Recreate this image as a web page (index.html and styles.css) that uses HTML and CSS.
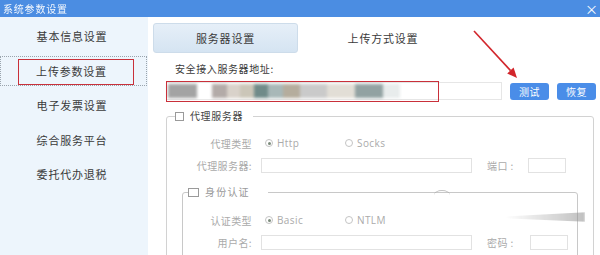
FILE: index.html
```html
<!DOCTYPE html>
<html lang="zh-CN">
<head>
<meta charset="utf-8">
<title>系统参数设置</title>
<link rel="stylesheet" href="styles.css">
</head>
<body>
<div class="window">
  <div class="titlebar">
    <span class="title">系统参数设置</span>
    <span class="close">×</span>
  </div>
  <div class="main">
    <nav class="sidebar">
      <div class="nav-item">基本信息设置</div>
      <div class="nav-item active"><div class="focus">上传参数设置</div><span class="mark"></span></div>
      <div class="nav-item">电子发票设置</div>
      <div class="nav-item">综合服务平台</div>
      <div class="nav-item">委托代办退税</div>
    </nav>
    <section class="content">
      <div class="tabs">
        <div class="tab tab-active">服务器设置</div>
        <div class="tab tab-plain">上传方式设置</div>
      </div>
      <div class="addr-label">安全接入服务器地址:</div>
      <div class="addr-row">
        <div class="addr-input">
          <div class="blurred"></div>
          <span class="addr-mark"></span>
        </div>
        <button class="btn">测试</button>
        <button class="btn">恢复</button>
      </div>
      <fieldset class="group outer">
        <legend class="legend"><span class="check"></span>代理服务器</legend>
        <div class="row">
          <span class="lbl lbl-outer">代理类型</span>
          <div class="radios">
            <span class="opt"><span class="radio on"></span>Http</span>
            <span class="opt"><span class="radio"></span>Socks</span>
          </div>
        </div>
        <div class="row">
          <span class="lbl lbl-outer">代理服务器:</span>
          <span class="inp inp-wide"></span>
          <span class="lbl2 port-lbl">端口 :</span>
          <span class="inp inp-port"></span>
        </div>
        <fieldset class="group inner">
          <legend class="legend legend-inner"><span class="check"></span>身份认证</legend>
          <div class="row">
            <span class="lbl lbl-inner">认证类型</span>
            <div class="radios">
              <span class="opt"><span class="radio on"></span>Basic</span>
              <span class="opt"><span class="radio"></span>NTLM</span>
            </div>
          </div>
          <div class="row">
            <span class="lbl lbl-inner">用户名:</span>
            <span class="inp inp-wide"></span>
            <span class="lbl2 pwd-lbl">密码 :</span>
            <span class="inp inp-pwd"></span>
          </div>
        </fieldset>
      </fieldset>
    </section>
  </div>
  <span class="smear"></span>
  <span class="arc"></span>
  <svg class="arrow" width="600" height="255" viewBox="0 0 600 255">
    <line x1="474" y1="31" x2="510.6" y2="70.6" stroke="#d2262c" stroke-width="1.6"/>
    <polygon points="517,78 507.2,73.4 513.6,67.6" fill="#d2262c"/>
  </svg>
</div>
</body>
</html>
```

FILE: styles.css
```css
* { box-sizing: border-box; margin: 0; padding: 0; }
body { margin: 0; background: #fff; font-family: "Noto Sans CJK SC", "Noto Sans", sans-serif; }

.window { width: 600px; height: 255px; overflow: hidden; position: relative; display: flex; flex-direction: column; background: #fff; }

.titlebar { height: 17px; flex: none; background: #4b8de2; color: #fff; display: flex; align-items: center; justify-content: space-between; padding: 0 2px 0 3px; }
.title { font-size: 10px; line-height: 12px; letter-spacing: 0.8px; opacity: 0.92; }
.close { font-size: 13px; line-height: 12px; }

.main { flex: 1; display: flex; min-height: 0; }

.sidebar { width: 148px; flex: none; background: #edf5fc; padding-top: 2px; display: flex; flex-direction: column; }
.nav-item { height: 34.5px; display: flex; align-items: center; justify-content: center; padding-right: 4px; font-size: 11px; letter-spacing: 0.8px; color: #3a3a3a; position: relative; }
.nav-item.active { padding-right: 0; }
.focus { width: 147px; height: 30px; margin-right: 1px; border: 1px dotted #9aa4ad; display: flex; align-items: center; justify-content: center; padding-right: 4px; }
.mark { position: absolute; left: 18px; top: 5px; width: 116px; height: 26px; border: 1.5px solid #c9303a; }

.content { flex: 1; margin-left: 5px; display: flex; flex-direction: column; }

.tabs { display: flex; margin-top: 6px; height: 30px; flex: none; }
.tab { height: 30px; display: flex; align-items: center; justify-content: center; font-size: 11px; letter-spacing: 0.8px; color: #3a3a3a; }
.tab-active { width: 145px; background: linear-gradient(#e6eff8, #d5e4f2); border: 1px solid #cddcea; border-radius: 3px; }
.tab-plain { width: 170px; }

.addr-label { margin-top: 10px; padding-left: 22px; font-size: 10px; line-height: 12px; letter-spacing: 0.6px; color: #3a3a3a; }

.addr-row { margin-top: 7px; margin-left: 13px; height: 20px; display: flex; align-items: center; }
.addr-input { width: 336px; height: 18px; border: 1px solid #e6e6e6; background: #fff; position: relative; }
.blurred { position: absolute; left: 1px; top: 1px; width: 232px; height: 14px; filter: blur(1.4px);
  background: linear-gradient(to right,
    #a3a3a3 0, #a3a3a3 29px, #fff 29px, #fff 44px,
    #b3aba8 44px, #b3aba8 59px, #d9d2ca 59px, #d9d2ca 72px,
    #cbc6b8 72px, #cbc6b8 86px, #708b89 86px, #708b89 100px,
    #a8b8b8 100px, #a8b8b8 115px, #b5ad9d 115px, #b5ad9d 132px,
    #cacaca 132px, #cacaca 159px, #e2ded6 159px, #e2ded6 187px,
    #92a2a2 187px, #92a2a2 215px, #e8ecec 215px, #e8ecec 232px); }
.addr-mark { position: absolute; left: -1px; top: -2px; width: 273px; height: 21px; border: 1.5px solid #c9303a; }

.btn { width: 39px; height: 17px; margin-left: 8px; border: none; border-radius: 3px; background: #4a8de8; color: #fff; font-family: inherit; font-size: 10px; letter-spacing: 0.6px; line-height: 17px; }

.group { border: 1px solid #d2d2d2; border-radius: 3px; min-width: 0; }
.outer { margin: 10px 6px 0 13px; padding: 10px 0 0 0; flex: 1; }
.inner { margin: 10px 15px 0 15px; padding: 11px 0 30px 0; border-color: #c8c8c8; }

.legend { margin-left: 8px; padding-right: 10px; display: flex; align-items: center; height: 12px; font-size: 10px; line-height: 12px; letter-spacing: 0.6px; color: #444; }
.legend-inner { margin-left: 5px; padding-right: 18px; color: #999; letter-spacing: 1.2px; }
.check { width: 9px; height: 9px; border: 1px solid #9a9a9a; background: #fff; margin-right: 6px; }
.legend-inner .check { width: 11px; margin-right: 6px; }

.row { height: 22px; display: flex; align-items: center; font-size: 10px; color: #aaa; letter-spacing: 0.4px; }
.lbl { text-align: right; }
.lbl-outer { width: 85px; }
.lbl-inner { width: 69px; }
.radios { display: flex; margin-left: 13px; }
.opt { width: 80px; display: flex; align-items: center; font-family: "Open Sans", "Noto Sans", sans-serif; font-size: 10px; color: #aaa; }
.radio { width: 8px; height: 8px; border: 1px solid #c4c4c4; border-radius: 50%; margin-right: 4px; display: flex; align-items: center; justify-content: center; }
.radio.on::after { content: ""; width: 3px; height: 3px; border-radius: 50%; background: #7a8a7a; }

.inp { height: 15px; border: 1px solid #e2e2e2; background: #fff; }
.inp-wide { width: 211px; margin-left: 9px; }
.lbl2 { margin-left: 15px; color: #aaa; }
.port-lbl { width: 41px; }
.pwd-lbl { width: 43px; }
.inp-port { width: 38px; }
.inp-pwd { width: 38px; }

.smear { position: absolute; left: 505px; top: 211px; width: 80px; height: 12px; background: linear-gradient(to right, rgba(170,170,170,0), rgba(150,150,150,0.6)); clip-path: polygon(0 45%, 100% 10%, 100% 90%, 0 60%); filter: blur(1px); }
.arc { position: absolute; left: 434px; top: 190px; width: 16px; height: 10px; border-top: 1.5px solid #999; border-radius: 50%; opacity: 0.6; }

.arrow { position: absolute; left: 0; top: 0; pointer-events: none; }
```
